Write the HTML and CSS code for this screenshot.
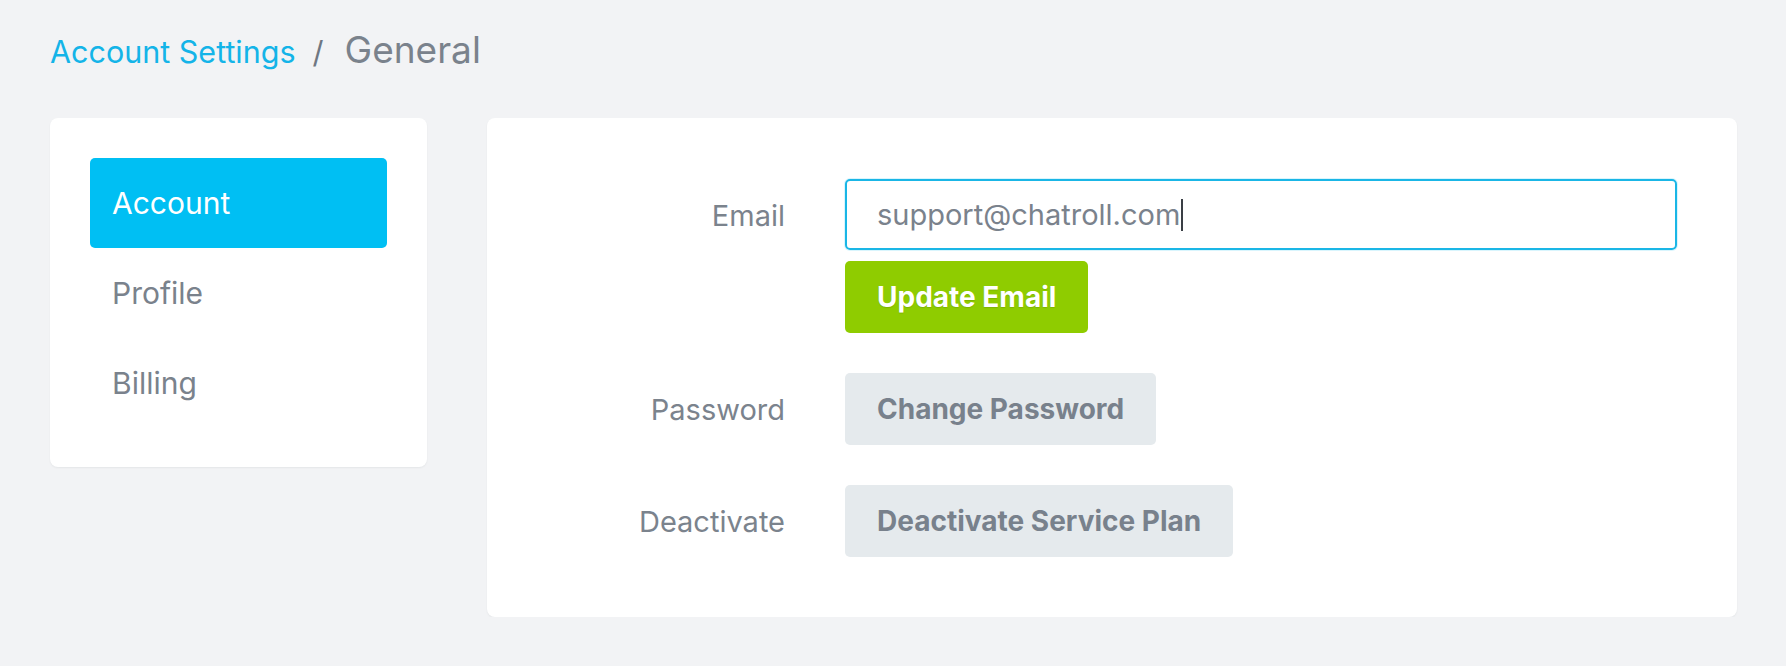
FILE: index.html
```html
<!DOCTYPE html>
<html lang="en">
<head>
<meta charset="utf-8">
<title>Account Settings / General</title>
<link rel="stylesheet" href="styles.css">
</head>
<body>
<div class="page">
  <nav class="breadcrumb">
    <a class="crumb-link" href="#">Account Settings</a>
    <span class="crumb-sep">/</span>
    <span class="crumb-current">General</span>
  </nav>
  <div class="layout">
    <aside class="sidebar">
      <a class="nav-item active" href="#">Account</a>
      <a class="nav-item" href="#">Profile</a>
      <a class="nav-item" href="#">Billing</a>
    </aside>
    <section class="card">
      <div class="row">
        <div class="label">Email</div>
        <div class="field">
          <div class="text-input" role="textbox">support@chatroll.com<span class="caret"></span></div>
          <button class="btn btn-green">Update Email</button>
        </div>
      </div>
      <div class="row">
        <div class="label">Password</div>
        <div class="field">
          <button class="btn btn-gray">Change Password</button>
        </div>
      </div>
      <div class="row">
        <div class="label">Deactivate</div>
        <div class="field">
          <button class="btn btn-gray">Deactivate Service Plan</button>
        </div>
      </div>
    </section>
  </div>
</div>
</body>
</html>
```

FILE: styles.css
```css
* { box-sizing: border-box; }
html, body {
  margin: 0;
  background: #f2f3f5;
  font-family: Inter, "Noto Sans", "Liberation Sans", sans-serif;
}
.page {
  padding: 27px 49px 0 50px;
}
.breadcrumb {
  display: flex;
  align-items: baseline;
  height: 46px;
  line-height: 46px;
}
.crumb-link {
  color: #14b4e8;
  text-decoration: none;
  font-size: 30.5px;
}
.crumb-sep {
  color: #6f7782;
  font-size: 30.5px;
  margin: 0 21px 0 17px;
}
.crumb-current {
  color: #7a828c;
  font-size: 37px;
}
.layout {
  display: flex;
  gap: 60px;
  margin-top: 45px;
  align-items: flex-start;
}
.sidebar {
  width: 377px;
  flex: none;
  background: #fff;
  border-radius: 8px;
  padding: 40px 40px 39px;
  box-shadow: 0 1px 2px rgba(20, 30, 40, 0.06);
  display: flex;
  flex-direction: column;
}
.nav-item {
  height: 90px;
  display: flex;
  align-items: center;
  padding-left: 22px;
  font-size: 30px;
  color: #7a828c;
  text-decoration: none;
  border-radius: 5px;
}
.nav-item.active {
  background: #00bff3;
  color: #fff;
}
.card {
  flex: 1;
  background: #fff;
  border-radius: 8px;
  padding: 61px 60px 60px;
  box-shadow: 0 1px 2px rgba(20, 30, 40, 0.06);
  display: flex;
  flex-direction: column;
  gap: 40px;
}
.row {
  display: grid;
  grid-template-columns: 238px 1fr;
  column-gap: 60px;
  align-items: start;
}
.label {
  height: 72px;
  display: flex;
  align-items: center;
  justify-content: flex-end;
  font-size: 29px;
  color: #7b838d;
}
.field {
  display: flex;
  flex-direction: column;
  align-items: flex-start;
  gap: 11px;
}
.text-input {
  width: 100%;
  height: 71px;
  border: 2px solid #1ab6e6;
  border-radius: 5px;
  box-shadow: 0 0 0 1px rgba(0, 191, 243, 0.15);
  padding: 0 30px;
  display: flex;
  align-items: center;
  font-size: 29px;
  color: #7a828c;
}
.caret {
  display: inline-block;
  width: 2px;
  height: 32px;
  background: #3a3f45;
  margin-left: 1px;
}
.btn {
  height: 72px;
  border: none;
  border-radius: 5px;
  padding: 0 32px;
  font-family: inherit;
  font-size: 28px;
  font-weight: 700;
  letter-spacing: 0;
  cursor: pointer;
}
.btn-green {
  background: #8fcc00;
  color: #fff;
  text-shadow: 0 1px 1px rgba(0, 0, 0, 0.12);
}
.btn-gray {
  background: #e5eaed;
  color: #78818c;
}
```
